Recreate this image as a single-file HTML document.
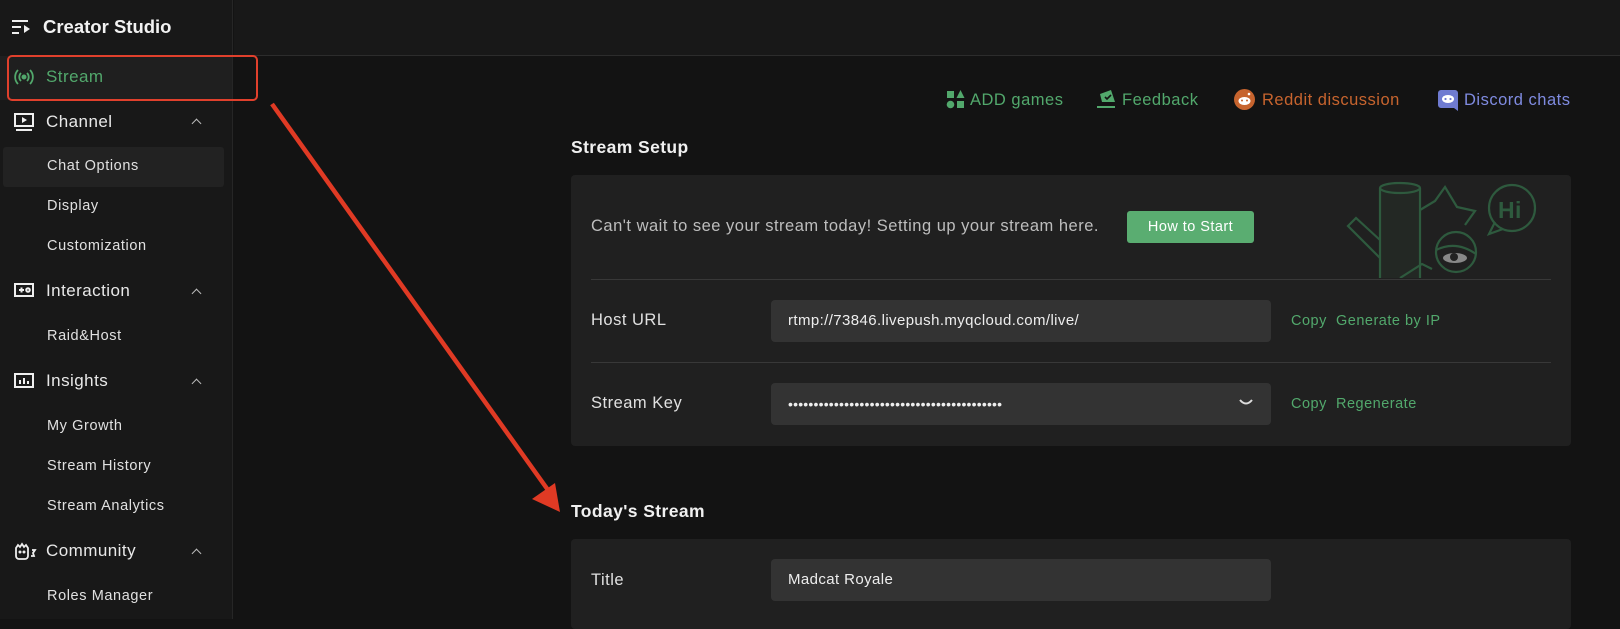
<!DOCTYPE html>
<html><head><meta charset="utf-8"><style>
*{margin:0;padding:0;box-sizing:border-box}
body{width:1620px;height:619px;overflow:hidden;background:#131313;font-family:"Liberation Sans",sans-serif;color:#e6e6e6;position:relative;letter-spacing:0.45px}
.abs{position:absolute}
.side{left:0;top:0;width:233px;height:619px;background:#181818;border-right:1px solid #262626}
.top{left:234px;top:0;width:1386px;height:56px;background:#181818;border-bottom:1px solid #2c2c2c}
.nav{position:absolute;left:46px;font-size:17px;color:#e8e8e8;line-height:20px}
.sub{position:absolute;left:47px;font-size:14.5px;color:#e0e0e0;line-height:18px;letter-spacing:0.6px}
.chev{position:absolute;left:193px;width:7px;height:7px;border-left:1.3px solid #bbb;border-top:1.3px solid #bbb;transform:rotate(45deg)}
.ic{position:absolute;left:13px}
.lnk{position:absolute;top:90px;font-size:16.5px;line-height:20px;letter-spacing:0.5px}
.card{position:absolute;left:571px;width:1000px;background:#202020;border-radius:4px}
.h{position:absolute;left:571px;font-size:17.5px;font-weight:bold;color:#f0f0f0;letter-spacing:0.4px}
.lbl{position:absolute;left:591px;font-size:16.5px;color:#e0e0e0;letter-spacing:0.5px}
.inp{position:absolute;left:771px;width:500px;height:42px;background:#333;border-radius:4px;font-size:15px;color:#eee;padding-left:17px;line-height:42px;letter-spacing:0.4px}
.div{position:absolute;left:591px;width:960px;height:1px;background:#383838}
.g{position:absolute;font-size:14.5px;color:#52a86c;letter-spacing:0.5px}
</style></head><body>
<div class="abs side"></div>
<div class="abs top"></div>
<svg class="abs" style="left:11px;top:18px" width="20" height="18" viewBox="0 0 20 18"><g fill="#eee"><rect x="1" y="2" width="16" height="2"/><rect x="1" y="8" width="9" height="2"/><rect x="1" y="14" width="7" height="2"/><path d="M19 11l-6-4v8z"/></g></svg>
<div class="abs" style="left:43px;top:16px;font-size:18.5px;font-weight:bold;color:#f2f2f2;letter-spacing:0">Creator Studio</div>
<div class="abs" style="left:0;top:56px;width:232px;height:44px;background:#1f1f1f"></div>
<div class="abs" style="left:7px;top:55px;width:251px;height:46px;border:2px solid #e0402c;border-radius:5px"></div>
<svg class="abs" style="left:13px;top:68px" width="22" height="18" viewBox="0 0 22 18" fill="none" stroke="#52a86c" stroke-width="1.8"><path d="M5 2a10 10 0 0 0 0 14M17 2a10 10 0 0 1 0 14M8 5a5.5 5.5 0 0 0 0 8M14 5a5.5 5.5 0 0 1 0 8"/><circle cx="11" cy="9" r="1.6" fill="#52a86c"/></svg>
<div class="nav" style="top:67px;color:#52a86c">Stream</div>
<svg class="ic" style="top:112px" width="22" height="20" viewBox="0 0 22 20" fill="none" stroke="#eee" stroke-width="2"><rect x="2" y="2" width="18" height="12"/><path d="M3 18h16"/><path d="M9 5v6l5-3z" fill="#eee" stroke="none"/></svg>
<div class="nav" style="top:112px">Channel</div><div class="chev" style="top:120px"></div>
<div class="abs" style="left:3px;top:147px;width:221px;height:40px;background:#222;border-radius:3px"></div>
<div class="sub" style="top:157px">Chat Options</div>
<div class="sub" style="top:197px">Display</div>
<div class="sub" style="top:237px">Customization</div>
<svg class="ic" style="top:282px" width="22" height="18" viewBox="0 0 22 18" fill="none" stroke="#eee" stroke-width="2"><rect x="2" y="2" width="18" height="12"/><path d="M6 8h5M8.5 5.5v5" /><circle cx="15" cy="8" r="1.8"/></svg>
<div class="nav" style="top:281px">Interaction</div><div class="chev" style="top:290px"></div>
<div class="sub" style="top:327px">Raid&amp;Host</div>
<svg class="ic" style="top:372px" width="22" height="18" viewBox="0 0 22 18" fill="none" stroke="#eee" stroke-width="2"><rect x="2" y="2" width="18" height="13"/><path d="M7 12V8M11 12V6M15 12V9"/></svg>
<div class="nav" style="top:371px">Insights</div><div class="chev" style="top:380px"></div>
<div class="sub" style="top:417px">My Growth</div>
<div class="sub" style="top:457px">Stream History</div>
<div class="sub" style="top:497px">Stream Analytics</div>
<svg class="ic" style="top:541px" width="24" height="20" viewBox="0 0 24 20" fill="none" stroke="#eee" stroke-width="1.8"><path d="M3 7l2-3 2 2 2-3 2 3 2-2 2 3v8a3 3 0 0 1-3 3H6a3 3 0 0 1-3-3z"/><path d="M19 9h3l-2 3 1 3h-3"/><circle cx="7" cy="11" r=".6" fill="#eee"/><circle cx="11" cy="11" r=".6" fill="#eee"/></svg>
<div class="nav" style="top:541px">Community</div><div class="chev" style="top:550px"></div>
<div class="sub" style="top:587px">Roles Manager</div>
<svg class="abs" style="left:946px;top:90px" width="19" height="19" viewBox="0 0 19 19" fill="#52a86c"><rect x="1" y="1" width="7" height="7"/><path d="M14.5 0l4 8h-8z"/><circle cx="4.5" cy="14.5" r="3.8"/><rect x="11" y="11" width="7" height="7"/></svg>
<div class="lnk" style="left:970px;color:#52a86c">ADD games</div>
<svg class="abs" style="left:1097px;top:89px" width="20" height="21" viewBox="0 0 20 21"><path d="M3 5l11-4 4 12H5z" fill="#52a86c"/><path d="M8 8l2 2 4-4" stroke="#131313" stroke-width="1.6" fill="none"/><rect x="0" y="17" width="18" height="2" fill="#52a86c"/></svg>
<div class="lnk" style="left:1122px;color:#52a86c">Feedback</div>
<svg class="abs" style="left:1234px;top:89px" width="21" height="21" viewBox="0 0 21 21"><circle cx="10.5" cy="10.5" r="10.5" fill="#c7642e"/><ellipse cx="10.5" cy="12" rx="6" ry="4" fill="#fff"/><circle cx="8" cy="11.5" r="1" fill="#c7642e"/><circle cx="13" cy="11.5" r="1" fill="#c7642e"/><circle cx="15" cy="5" r="1.3" fill="#fff"/></svg>
<div class="lnk" style="left:1262px;color:#c7642e">Reddit discussion</div>
<svg class="abs" style="left:1438px;top:90px" width="20" height="21" viewBox="0 0 20 21"><path d="M3 0h14a3 3 0 0 1 3 3v18l-4-3H3a3 3 0 0 1-3-3V3a3 3 0 0 1 3-3z" fill="#6f7bd1"/><ellipse cx="10" cy="9" rx="6" ry="4" fill="#fff"/><circle cx="7.5" cy="9" r="1.1" fill="#6f7bd1"/><circle cx="12.5" cy="9" r="1.1" fill="#6f7bd1"/></svg>
<div class="lnk" style="left:1464px;color:#7f8be0">Discord chats</div>
<div class="h" style="top:137px">Stream Setup</div>
<div class="card" style="top:175px;height:271px"></div>
<svg class="abs" style="left:1340px;top:180px" width="200" height="98" viewBox="0 0 200 98" fill="none" stroke="#2e5a3e" stroke-width="2.2"><path d="M40 6h40v92H40z" fill="#232824" stroke="none"/><path d="M40 8v90M80 8v90"/><ellipse cx="60" cy="8" rx="20" ry="5" fill="#232824"/><path d="M40 60L16 38l-8 8 32 32"/><path d="M80 30l15-9 10-14 12 20 18 4-10 14"/><circle cx="116" cy="72" r="20"/><path d="M96 70q20-10 40 4"/><ellipse cx="115" cy="78" rx="12" ry="5" fill="#888" stroke="none"/><circle cx="114" cy="77" r="4" fill="#222" stroke="none"/><circle cx="172" cy="28" r="23"/><path d="M155 42l-6 12 14-5"/><text x="158" y="38" fill="#2e5a3e" stroke="none" font-size="23" font-weight="bold" font-family="Liberation Sans">Hi</text><path d="M60 98l22-14 10 5"/></svg>
<div class="lbl" style="top:217px;color:#bdbdbd">Can't wait to see your stream today! Setting up your stream here.</div>
<div class="abs" style="left:1127px;top:211px;width:127px;height:32px;background:#5aad71;border-radius:3px;color:#fff;font-size:14.5px;text-align:center;line-height:32px">How to Start</div>
<div class="div" style="top:279px"></div>
<div class="lbl" style="top:311px">Host URL</div>
<div class="inp" style="top:300px">rtmp://73846.livepush.myqcloud.com/live/</div>
<div class="g" style="left:1291px;top:313px">Copy</div><div class="g" style="left:1336px;top:313px">Generate by IP</div>
<div class="div" style="top:362px"></div>
<div class="lbl" style="top:394px">Stream Key</div>
<div class="inp" style="top:383px;letter-spacing:0.2px;font-size:14px">••••••••••••••••••••••••••••••••••••••••••</div>
<svg class="abs" style="left:1239px;top:399px" width="14" height="8" viewBox="0 0 14 8"><path d="M1 1q6 7 12 0" stroke="#ddd" stroke-width="2" fill="none"/></svg>
<div class="g" style="left:1291px;top:396px">Copy</div><div class="g" style="left:1336px;top:396px">Regenerate</div>
<div class="h" style="top:501px">Today's Stream</div>
<div class="card" style="top:539px;height:90px"></div>
<div class="lbl" style="top:571px">Title</div>
<div class="inp" style="top:559px">Madcat Royale</div>
<svg class="abs" style="left:0;top:0" width="1620" height="619"><line x1="272" y1="104" x2="548" y2="490" stroke="#e03a24" stroke-width="4.5"/><path d="M560 512l-28-13 23-16z" fill="#e03a24"/></svg>
</body></html>
